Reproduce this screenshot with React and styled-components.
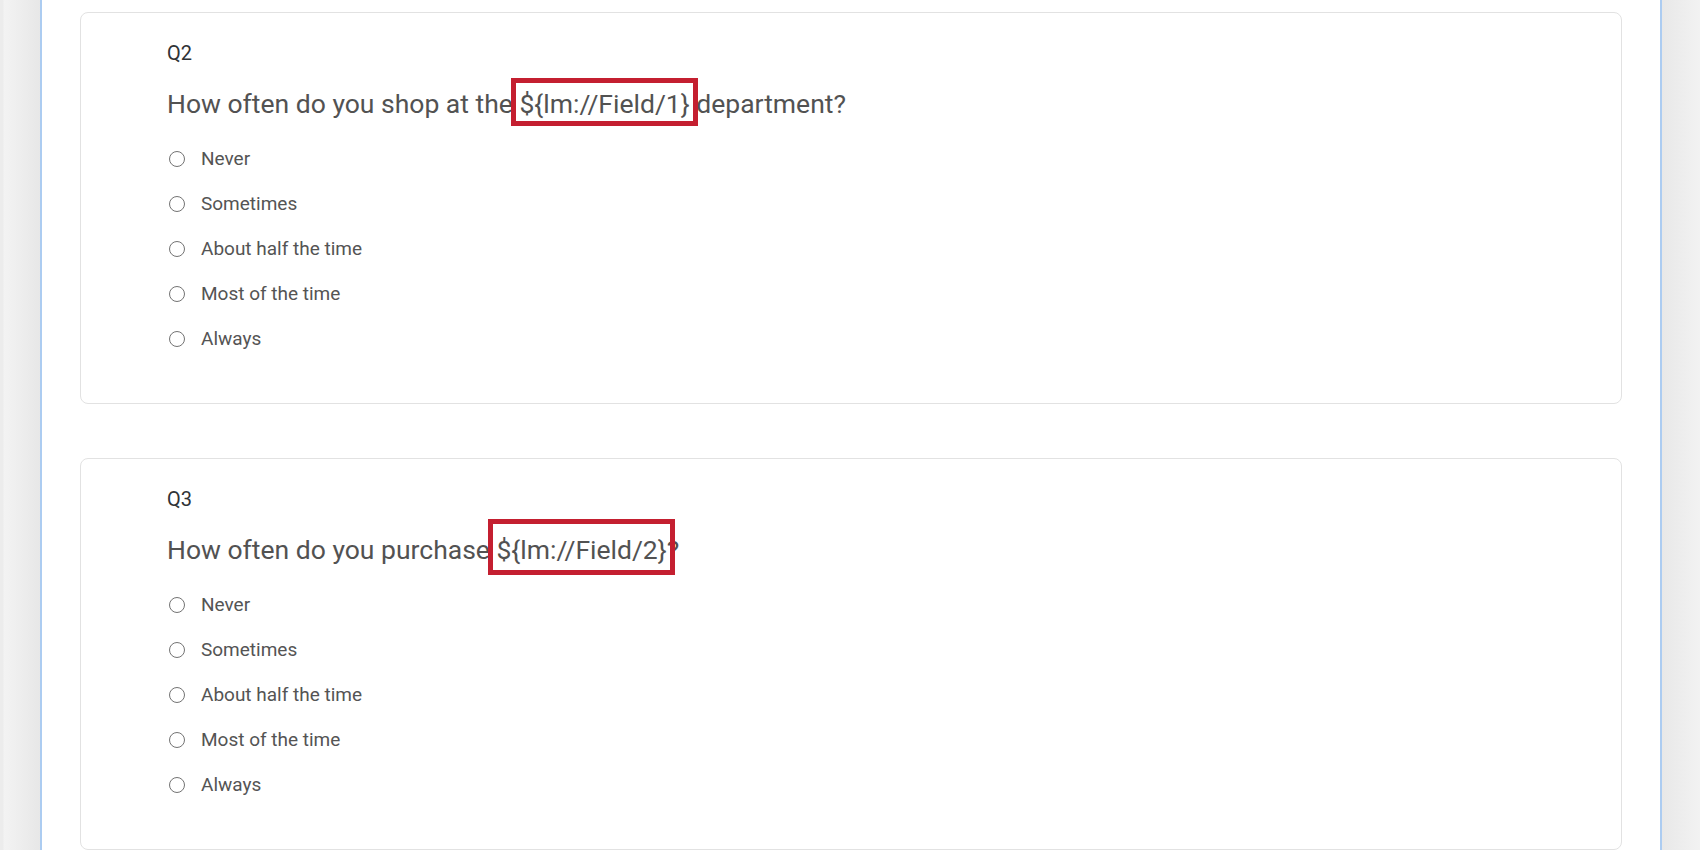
import React from "react";
import styled, { createGlobalStyle } from "styled-components";

const GlobalStyle = createGlobalStyle`
  html, body {
    margin: 0;
    padding: 0;
    background: #ffffff;
  }
  body {
    font-family: Roboto, "Liberation Sans", Arial, sans-serif;
    overflow: hidden;
  }
`;

const questions = [
  {
    id: "Q2",
    before: "How often do you shop at the ",
    field: "${lm://Field/1}",
    after: " department?",
    tall: false,
  },
  {
    id: "Q3",
    before: "How often do you purchase ",
    field: "${lm://Field/2}",
    after: "?",
    tall: true,
  },
];

const choices = [
  "Never",
  "Sometimes",
  "About half the time",
  "Most of the time",
  "Always",
];

const App = () => {
  return (
    <>
      <GlobalStyle />
      <Page>
        <Rail side="left" />
        <Canvas>
          {questions.map((q) => (
            <Card key={q.id}>
              <Label>{q.id}</Label>
              <QuestionText>
                {q.before}
                <Piped tall={q.tall}>{q.field}</Piped>
                {q.after}
              </QuestionText>
              <Choices>
                {choices.map((c) => (
                  <Choice key={c}>
                    <Radio />
                    <span>{c}</span>
                  </Choice>
                ))}
              </Choices>
            </Card>
          ))}
        </Canvas>
        <Rail side="right" />
      </Page>
    </>
  );
};

export default App;

const Page = styled.div`
  display: flex;
  width: 1700px;
  height: 850px;
  overflow: hidden;
`;

const Rail = styled.div`
  flex: 0 0 ${(p) => (p.side === "left" ? "40px" : "38px")};
  background: ${(p) =>
    p.side === "left"
      ? "linear-gradient(to right, #ececec 0, #ececec 3px, #f3f3f3 4px, #e7e7e7 100%)"
      : "linear-gradient(to right, #e8e8e8 0, #f2f2f2 100%)"};
  border-${(p) => (p.side === "left" ? "right" : "left")}: 2px solid #acccf1;
`;

const Canvas = styled.div`
  flex: 1;
  display: flex;
  flex-direction: column;
  gap: 54px;
  padding: 12px 38px 0 38px;
  background: #ffffff;
`;

const Card = styled.div`
  border: 1.5px solid #e2e2e2;
  border-radius: 8px;
  padding: 28px 80px 42px 86px;
  flex: 0 0 auto;
`;

const Label = styled.div`
  font-size: 20px;
  line-height: 24px;
  color: #2f3236;
`;

const QuestionText = styled.div`
  margin-top: 21px;
  font-size: 26.5px;
  line-height: 36px;
  color: #525252;
`;

// red annotation box drawn over the piped-text placeholder
const Piped = styled.span`
  position: relative;
  &::after {
    content: "";
    position: absolute;
    left: -8px;
    right: -8px;
    top: ${(p) => (p.tall ? "-15px" : "-10px")};
    bottom: ${(p) => (p.tall ? "-10px" : "-7px")};
    border: 5px solid #c41f30;
    pointer-events: none;
  }
`;

const Choices = styled.div`
  margin-top: 14px;
  display: flex;
  flex-direction: column;
`;

const Choice = styled.div`
  display: flex;
  align-items: center;
  gap: 16px;
  height: 45px;
  font-size: 19px;
  color: #545454;
`;

const Radio = styled.span`
  margin-left: 2px;
  width: 14px;
  height: 14px;
  border: 1.5px solid #737373;
  border-radius: 50%;
  flex: 0 0 auto;
`;
